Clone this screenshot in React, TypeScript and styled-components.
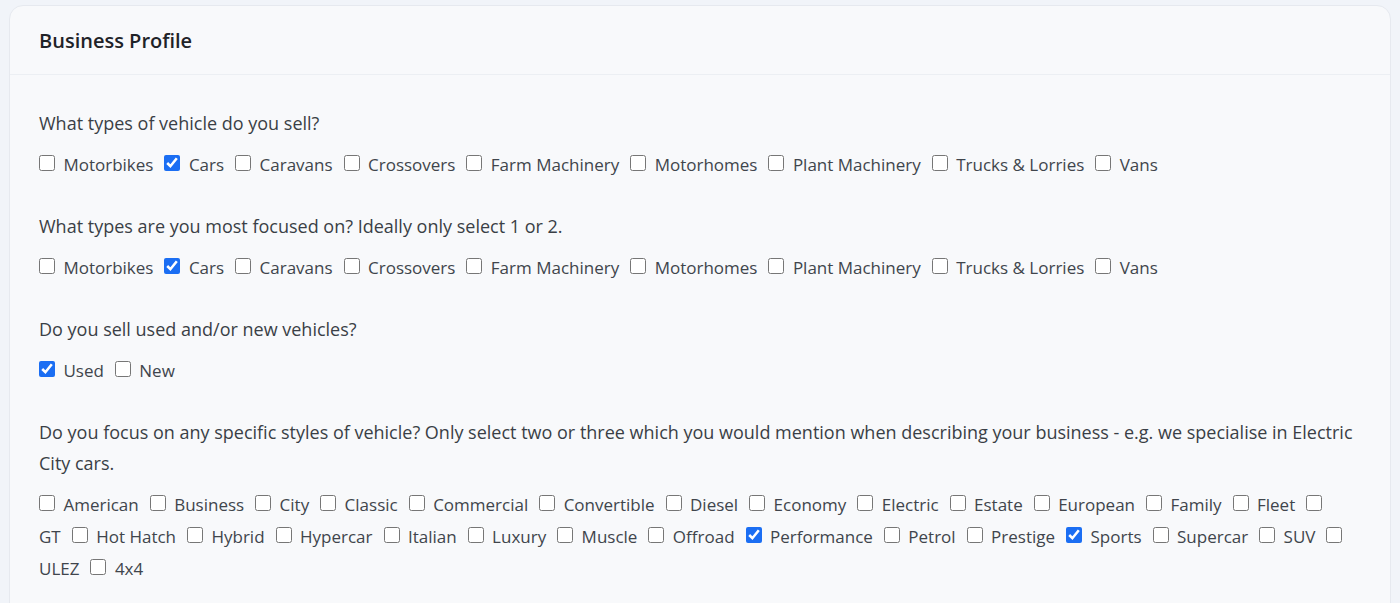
import React from 'react'
import styled, { createGlobalStyle } from 'styled-components'

//Global
const GlobalStyle = createGlobalStyle`
  html, body {
    margin: 0;
    padding: 0;
    background: #f1f4f9;
    font-family: 'Open Sans', 'Liberation Sans', sans-serif;
  }
`

//Styled Components
const Page = styled.div`
  padding: 5px 9px 0 9px;
  height: 603px;
  overflow: hidden;
  box-sizing: border-box;
`

const Card = styled.section`
  background: #f8f9fb;
  border: 1px solid #e6e9ef;
  border-radius: 14px;
  min-height: 700px;
`

const CardHeader = styled.header`
  padding: 21px 29px 20px;
  border-bottom: 1px solid #eceff3;
`

const Title = styled.h2`
  margin: 0;
  font-size: 20px;
  font-weight: 600;
  line-height: 27px;
  color: #1f2328;
`

const CardBody = styled.div`
  padding: 33px 29px 33px;
  display: flex;
  flex-direction: column;
  gap: 30px;
`

const Field = styled.div`
  display: flex;
  flex-direction: column;
  gap: 10px;
`

const Question = styled.p`
  margin: 0;
  font-size: 18px;
  line-height: 31px;
  color: #3a3f46;
`

const Options = styled.div`
  padding-right: 11px;
  font-size: 17px;
  line-height: 32px;
  color: #40454c;
`

const Check = styled.input`
  width: 16px;
  height: 16px;
  margin: 0 4px 0 6.6px;
  vertical-align: baseline;
  accent-color: #1b6ef3;
  &:first-child {
    margin-left: 0;
  }
`

const OptionLabel = styled.label``

// Data
const vehicleTypes = [
  'Motorbikes',
  'Cars',
  'Caravans',
  'Crossovers',
  'Farm Machinery',
  'Motorhomes',
  'Plant Machinery',
  'Trucks & Lorries',
  'Vans',
]

const styles = [
  'American', 'Business', 'City', 'Classic', 'Commercial', 'Convertible',
  'Diesel', 'Economy', 'Electric', 'Estate', 'European', 'Family', 'Fleet',
  'GT', 'Hot Hatch', 'Hybrid', 'Hypercar', 'Italian', 'Luxury', 'Muscle',
  'Offroad', 'Performance', 'Petrol', 'Prestige', 'Sports', 'Supercar', 'SUV',
  'ULEZ', '4x4',
]

interface ICheckGroup {
  name: string
  items: string[]
  checked: string[]
}

function CheckGroup({ name, items, checked }: ICheckGroup) {
  return (
    <Options>
      {items.map((item) => {
        const id = `${name}-${item.replace(/\W/g, '')}`
        return (
          <React.Fragment key={id}>
            <Check type="checkbox" id={id} defaultChecked={checked.includes(item)} />{' '}
            <OptionLabel htmlFor={id}>{item}</OptionLabel>{' '}
          </React.Fragment>
        )
      })}
    </Options>
  )
}

//React Component
export default function App() {
  return (
    <>
      <GlobalStyle />
      <Page>
        <Card>
          <CardHeader>
            <Title>Business Profile</Title>
          </CardHeader>
          <CardBody>
            <Field>
              <Question>What types of vehicle do you sell?</Question>
              <CheckGroup name="sell" items={vehicleTypes} checked={['Cars']} />
            </Field>
            <Field>
              <Question>What types are you most focused on? Ideally only select 1 or 2.</Question>
              <CheckGroup name="focus" items={vehicleTypes} checked={['Cars']} />
            </Field>
            <Field>
              <Question>Do you sell used and/or new vehicles?</Question>
              <CheckGroup name="condition" items={['Used', 'New']} checked={['Used']} />
            </Field>
            <Field>
              <Question>
                Do you focus on any specific styles of vehicle? Only select two or three which you
                would mention when describing your business - e.g. we specialise in Electric City
                cars.
              </Question>
              <CheckGroup
                name="styles"
                items={styles}
                checked={['Performance', 'Sports']}
              />
            </Field>
          </CardBody>
        </Card>
      </Page>
    </>
  )
}
